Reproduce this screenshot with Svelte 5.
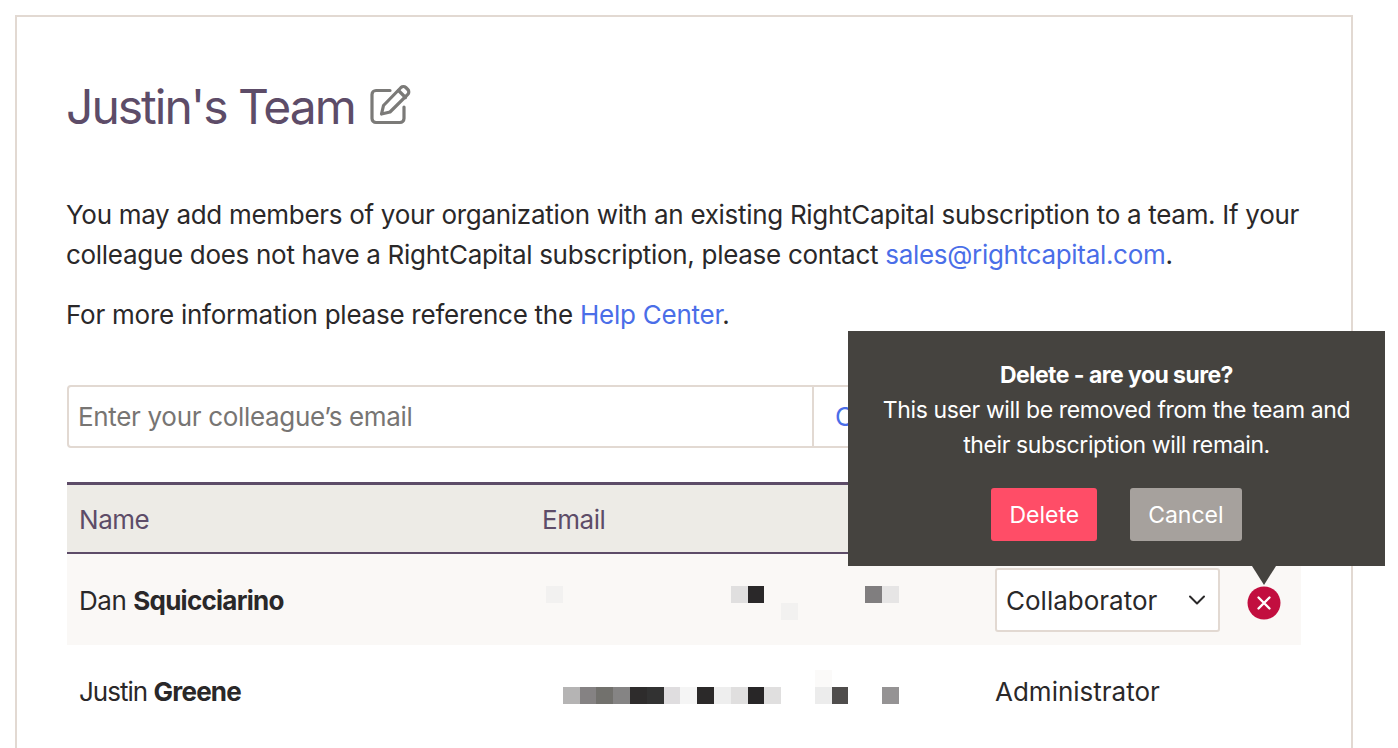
<script>
	const mosaicDan = [
		[0, 0, '#f2f1f0'], [11, 0, '#e0dfdf'], [12, 0, '#2a2829'], [14, 1, '#f2f1f0'],
		[19, 0, '#807e7f'], [20, 0, '#e6e5e5']
	];
	const mosaicJustin = [
		[1, 1, '#b5b4b4'], [2, 1, '#858283'], [3, 1, '#72716d'], [4, 1, '#858484'], [5, 1, '#2e2c2c'],
		[6, 1, '#323232'], [7, 1, '#dfdddf'], [8, 1, '#f5f5f5'], [9, 1, '#2b2929'], [10, 1, '#eeeeee'],
		[11, 1, '#e0dfdf'], [12, 1, '#282627'], [13, 1, '#e0dfdf'], [16, 0, '#fbfaf9'], [16, 1, '#ececec'],
		[17, 1, '#4f4d4c'], [20, 1, '#959394']
	];
</script>

<main class="page">
	<section class="card">
		<h1 class="title">
			Justin's Team
			<svg class="edit" width="42" height="42" viewBox="0 0 42 42" fill="none" stroke="currentColor" stroke-width="3.2" stroke-linecap="round" stroke-linejoin="round">
				<path d="M21 6.5H7a4 4 0 0 0-4 4v24a4 4 0 0 0 4 4h24a4 4 0 0 0 4-4V23" />
				<path d="M32 3.5a3.4 3.4 0 0 1 4.8 0l2 2a3.4 3.4 0 0 1 0 4.8L21 28l-8.5 2 2-8.5z" />
				<path d="M29.5 6.5l7 7" />
			</svg>
		</h1>

		<p class="intro">
			You may add members of your organization with an existing RightCapital subscription to a team. If your colleague does not have a RightCapital subscription, please contact <a href="#top">sales@rightcapital.com</a>.
		</p>
		<p class="intro more">
			For more information please reference the <a href="#top">Help Center</a>.
		</p>

		<form class="invite">
			<input type="text" placeholder="Enter your colleague’s email" />
			<button type="button">Create</button>
		</form>

		<div class="table">
			<div class="row head">
				<div class="name">Name</div>
				<div class="email">Email</div>
				<div class="role"></div>
			</div>
			<div class="row shaded">
				<div class="name">Dan <strong>Squicciarino</strong></div>
				<div class="email">
					<div class="mosaic low">
						{#each mosaicDan as [col, row, colour]}
							<i style="grid-column: {col + 1}; grid-row: {row + 1}; background: {colour}"></i>
						{/each}
					</div>
				</div>
				<div class="role">
					<div class="select">
						Collaborator
						<svg width="18" height="10" viewBox="0 0 18 10" fill="none" stroke="currentColor" stroke-width="2" stroke-linecap="round" stroke-linejoin="round">
							<path d="M2 1.5l7 7 7-7" />
						</svg>
					</div>
					<div class="remove">
						<svg width="34" height="34" viewBox="0 0 34 34">
							<circle cx="17" cy="17" r="16.5" fill="#c20e3f" />
							<path d="M11.5 11.5l11 11M22.5 11.5l-11 11" stroke="#fff" stroke-width="2.4" stroke-linecap="round" />
						</svg>
						<div class="tip">
							<p class="tip-text"><strong>Delete - are you sure?</strong><br />This user will be removed from the team and their subscription will remain.</p>
							<div class="tip-actions">
								<button type="button" class="danger">Delete</button>
								<button type="button" class="muted">Cancel</button>
							</div>
						</div>
					</div>
				</div>
			</div>
			<div class="row">
				<div class="name">Justin <strong>Greene</strong></div>
				<div class="email">
					<div class="mosaic high">
						{#each mosaicJustin as [col, row, colour]}
							<i style="grid-column: {col + 1}; grid-row: {row + 1}; background: {colour}"></i>
						{/each}
					</div>
				</div>
				<div class="role">Administrator</div>
			</div>
		</div>
	</section>
</main>

<style>
	:global(html), :global(body) {
		margin: 0;
		height: 100%;
		overflow: hidden;
		background: #fff;
	}

	.page {
		padding: 15px 45px 0 15px;
		font-family: Inter, "Liberation Sans", sans-serif;
		color: #2a2829;
		font-size: 26px;
	}

	.card {
		border: 2px solid #e2d9d2;
		border-bottom: 0;
		padding: 60px 50px 0;
		height: 760px;
		box-sizing: border-box;
	}

	.title {
		display: flex;
		align-items: center;
		gap: 14px;
		margin: 0 0 58px -1px;
		font-size: 48px;
		line-height: 60px;
		font-weight: 400;
		letter-spacing: -2px;
		color: #5d4c68;
	}

	.edit {
		color: #7b7a78;
		margin-top: -4px;
	}

	.intro {
		margin: 0 0 0 -1px;
		line-height: 40px;
		letter-spacing: -0.3px;
	}

	.more {
		margin-top: 20px;
		letter-spacing: -0.25px;
	}

	a {
		color: #4a6ee8;
		text-decoration: none;
	}

	.invite {
		display: flex;
		height: 63px;
		margin-top: 50px;
	}

	.invite input {
		width: 747px;
		box-sizing: border-box;
		border: 2px solid #e2d9d2;
		border-radius: 4px 0 0 4px;
		padding: 0 9px;
		font: inherit;
		letter-spacing: -0.32px;
		outline: none;
	}

	.invite input::placeholder {
		color: #777573;
		opacity: 1;
	}

	.invite button {
		flex: 1;
		border: 2px solid #e2d9d2;
		border-left: 0;
		border-radius: 0 4px 4px 0;
		background: #fff;
		color: #4a6ee8;
		font: inherit;
		text-align: left;
		padding: 0 21px;
	}

	.table {
		margin-top: 34px;
		border-top: 3px solid #5d4c68;
	}

	.row {
		display: grid;
		grid-template-columns: 463px 453px 1fr;
		align-items: center;
		height: 91px;
		padding-left: 12px;
	}

	.head {
		height: 67px;
		background: #edebe6;
		border-bottom: 2px solid #5d4c68;
		color: #5d4c68;
	}

	.shaded {
		background: #faf8f6;
	}

	.name, .email {
		letter-spacing: -0.45px;
		padding-top: 2px;
	}

	.row:last-child .name {
		letter-spacing: -1px;
	}

	strong {
		font-weight: 700;
		letter-spacing: -0.75px;
	}

	.mosaic {
		display: grid;
		grid-template-columns: repeat(21, 16.8px);
		grid-template-rows: repeat(2, 17px);
		margin-left: 4px;
	}

	.low {
		margin-top: 5px;
	}

	.high {
		margin-top: -9px;
	}

	.role {
		display: flex;
		align-items: center;
		gap: 27px;
		padding-top: 1px;
	}

	.select {
		display: flex;
		align-items: center;
		justify-content: space-between;
		box-sizing: border-box;
		width: 225px;
		height: 64px;
		padding: 0 12px 0 9px;
		background: #fff;
		border: 2px solid #e2d9d2;
		border-radius: 3px;
	}

	.remove {
		position: relative;
		display: flex;
		margin-top: 6px;
	}

	.tip {
		position: absolute;
		bottom: 54px;
		left: -399px;
		width: 537px;
		height: 235px;
		box-sizing: border-box;
		padding: 27px 20px 0;
		background: #45433f;
		color: #fff;
		font-size: 23px;
		letter-spacing: -0.38px;
		text-align: center;
	}

	/* arrow pointing down at the remove icon */
	.tip::after {
		content: '';
		position: absolute;
		top: 100%;
		left: 404px;
		border: 12px solid transparent;
		border-bottom: 0;
		border-top: 19px solid #45433f;
	}

	.tip-text {
		margin: 0;
		line-height: 35px;
	}

	.tip-text strong {
		letter-spacing: -0.55px;
	}

	.tip-actions {
		display: flex;
		justify-content: center;
		gap: 33px;
		margin-top: 25px;
	}

	.tip-actions button {
		height: 53px;
		border: 0;
		border-radius: 3px;
		padding: 0 18px;
		color: #fff;
		font: inherit;
	}

	.danger {
		background: #ff4d67;
	}

	.muted {
		background: #a6a19d;
	}
</style>
